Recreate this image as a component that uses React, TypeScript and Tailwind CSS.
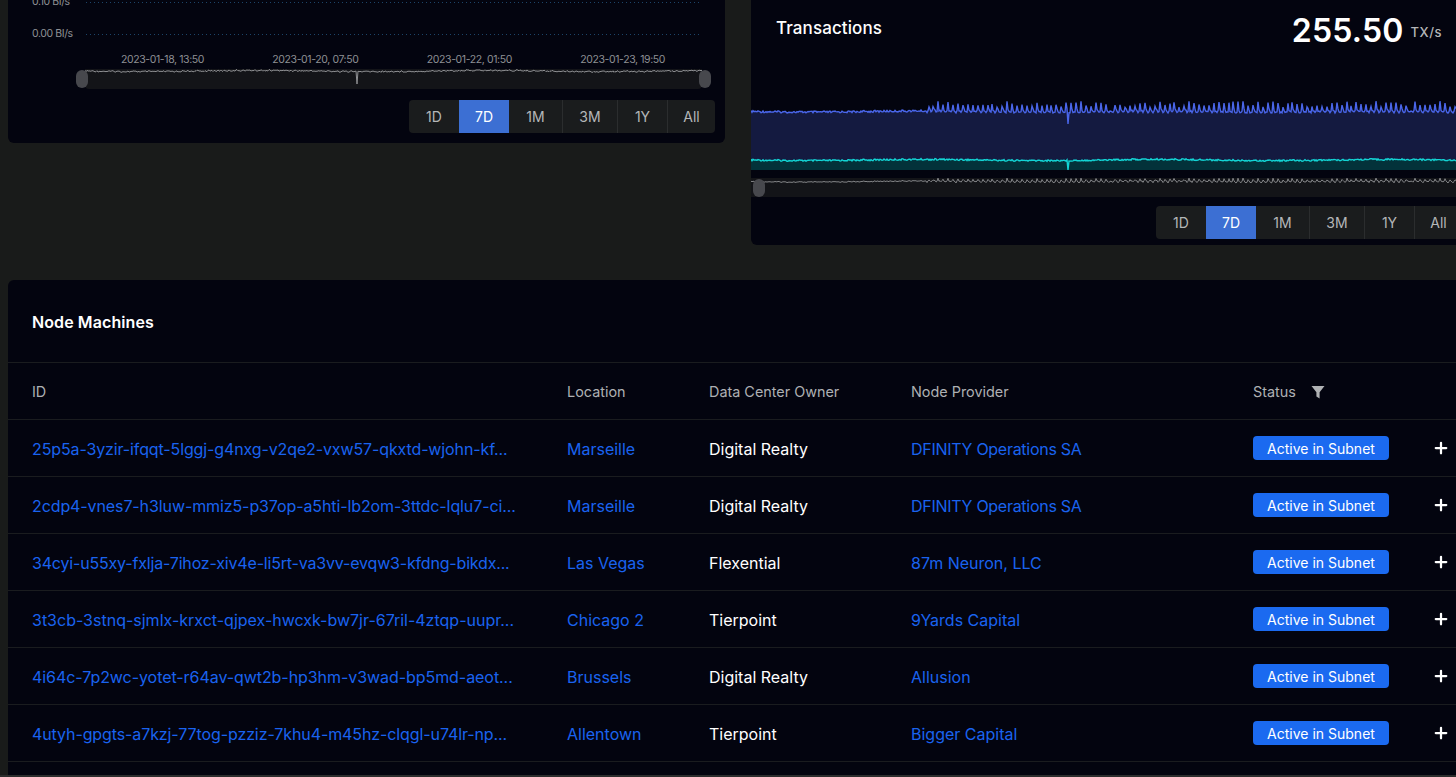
import { Plus } from "lucide-react";

const FONT = "font-['Inter','Liberation_Sans',sans-serif]";

type Row = { id: string; track: string; location: string; owner: string; provider: string };

const ROWS: Row[] = [
  { id: "25p5a-3yzir-ifqqt-5lggj-g4nxg-v2qe2-vxw57-qkxtd-wjohn-kf...", track: "tracking-[-0.12px]", location: "Marseille", owner: "Digital Realty", provider: "DFINITY Operations SA" },
  { id: "2cdp4-vnes7-h3luw-mmiz5-p37op-a5hti-lb2om-3ttdc-lqlu7-ci...", track: "tracking-[-0.1px]", location: "Marseille", owner: "Digital Realty", provider: "DFINITY Operations SA" },
  { id: "34cyi-u55xy-fxlja-7ihoz-xiv4e-li5rt-va3vv-evqw3-kfdng-bikdx...", track: "tracking-[-0.18px]", location: "Las Vegas", owner: "Flexential", provider: "87m Neuron, LLC" },
  { id: "3t3cb-3stnq-sjmlx-krxct-qjpex-hwcxk-bw7jr-67ril-4ztqp-uupr...", track: "tracking-normal", location: "Chicago 2", owner: "Tierpoint", provider: "9Yards Capital" },
  { id: "4i64c-7p2wc-yotet-r64av-qwt2b-hp3hm-v3wad-bp5md-aeot...", track: "tracking-[-0.06px]", location: "Brussels", owner: "Digital Realty", provider: "Allusion" },
  { id: "4utyh-gpgts-a7kzj-77tog-pzziz-7khu4-m45hz-clqgl-u74lr-np...", track: "tracking-[-0.1px]", location: "Allentown", owner: "Tierpoint", provider: "Bigger Capital" },
];

// small repeatable noise so the charts look the same on every load
function noise(i: number) {
  const v = Math.sin(i * 12.9898) * 43758.5453;
  return v - Math.floor(v);
}

function linePoints(
  width: number,
  base: number,
  jitter: number,
  spike: number,
  spikeFrom: number,
  dipAt: number,
  dipTo: number,
) {
  const pts: string[] = [];
  for (let x = 0; x <= width; x += 1) {
    const drift = Math.sin(x / 37) * 0.6;
    let y = base + drift + (noise(x) - 0.5) * jitter;
    if (x >= spikeFrom) {
      const phase = (x + Math.floor(x / 60)) % 5;
      if (phase === 0) y = base - spike * (0.45 + noise(x + 7) * 0.7);
      if (phase === 1) y = base - spike * 0.35 * noise(x + 3);
      if (phase === 3) y = base + 1.5 * noise(x + 11);
    }
    if (x === dipAt) y = dipTo;
    pts.push(`${x},${y.toFixed(1)}`);
  }
  return pts.join(" ");
}

function Ranges() {
  const items = [
    { label: "1D", w: "w-[50px]" },
    { label: "7D", w: "w-[50px]", active: true },
    { label: "1M", w: "w-[53px]" },
    { label: "3M", w: "w-[55px]" },
    { label: "1Y", w: "w-[50px]" },
    { label: "All", w: "w-[48px]" },
  ];
  return (
    <div className="flex h-[33px] w-max rounded-[4px] bg-[#1a1c1d] text-[14px] text-[#b4b6b8]">
      {items.map((it, i) => (
        <div
          key={it.label}
          className={`flex shrink-0 items-center justify-center ${it.w} ${
            it.active ? "bg-[#3c6fd3] text-white" : i > 2 ? "border-l border-[#2b2d2e]" : ""
          }`}
        >
          {it.label}
        </div>
      ))}
    </div>
  );
}

function Handle({ className }: { className: string }) {
  return <div className={`absolute top-px h-[18px] w-[12px] rounded-full bg-[#47484d] ${className}`} />;
}

function AxisRow({ label, className }: { label: string; className: string }) {
  return (
    <div className={`flex h-[16px] items-center text-[10.5px] tracking-[-0.4px] text-[#8e9094] ${className}`}>
      <span className="w-[54px] whitespace-nowrap">{label}</span>
      <div className="mr-[24px] h-px flex-1 bg-[repeating-linear-gradient(90deg,#1c4468_0_1px,transparent_1px_4px)]" />
    </div>
  );
}

function LeftCard() {
  return (
    <div className="-mt-[6px] flex h-[149px] w-[717px] shrink-0 flex-col rounded-b-[6px] bg-[#03040f] pl-[24px]">
      <AxisRow label="0.10 BI/s" className="" />
      <AxisRow label="0.00 BI/s" className="mt-[16px]" />
      <div className="ml-[89px] mt-[11px] flex w-[544px] justify-between text-[10.5px] leading-[14px] tracking-[-0.4px] text-[#8e9094]">
        <span>2023-01-18, 13:50</span>
        <span>2023-01-20, 07:50</span>
        <span>2023-01-22, 01:50</span>
        <span>2023-01-23, 19:50</span>
      </div>
      <div className="relative ml-[53px] mt-[2px] h-[20px] w-[617px] rounded-b-[4px] bg-[#131418]">
        <svg width="617" height="20" className="block">
          <polyline
            points={linePoints(617, 2, 1.6, 0, 9999, 272, 15)}
            fill="none"
            stroke="#8f9093"
            strokeWidth="1"
          />
        </svg>
        <Handle className="-left-[9px]" />
        <Handle className="-right-[9px]" />
      </div>
      <div className="mr-[10px] mt-[11px] flex justify-end">
        <Ranges />
      </div>
    </div>
  );
}

function RightCard() {
  const blue = linePoints(705, 111.5 - 60, 2, 9, 175, 317, 64);
  return (
    <div className="flex h-[245px] w-[730px] shrink-0 flex-col rounded-bl-[6px] bg-[#03040f]">
      <div className="flex h-[60px] items-start justify-between pl-[25px] pt-[17px]">
        <span className="text-[17px] font-medium leading-[22px] tracking-[0.1px] text-white">Transactions</span>
        <div className="mr-[39px] mt-[-6px] flex items-center whitespace-nowrap">
          <span className="text-[32px] font-semibold leading-[40px] tracking-[0.2px] text-white">255.50</span>
          <span className="ml-[7px] mt-[4px] text-[13px] font-medium tracking-[0.5px] text-[#b4b6b8]">TX/s</span>
        </div>
      </div>
      <svg width="705" height="118" className="block shrink-0">
        <rect x="0" y="54" width="705" height="47" fill="#141a40" />
        <rect x="0" y="100" width="705" height="10" fill="#03323a" />
        <polygon points={`0,56 ${blue} 705,56`} fill="#141a40" />
        <polyline points={blue} fill="none" stroke="#4a66ea" strokeWidth="1.4" />
        <polyline points={linePoints(705, 100, 1.6, 0, 9999, 317, 110)} fill="none" stroke="#13d4d4" strokeWidth="1.4" />
      </svg>
      <div className="relative h-[19px] w-full bg-[#131418]">
        <svg width="705" height="19" className="block">
          <polyline points={linePoints(705, 3.5, 1, 3, 175, 9999, 0)} fill="none" stroke="#838487" strokeWidth="1" />
        </svg>
        <Handle className="left-[2px]" />
      </div>
      <div className="mt-[9px] pl-[405px]">
        <Ranges />
      </div>
    </div>
  );
}

function FilterIcon() {
  return (
    <svg width="14" height="14" viewBox="0 0 14 14" className="ml-[15px]">
      <path d="M0.5 1h13L8.6 7.2V13.5L5.4 11.6V7.2Z" fill="#b0b2b4" />
    </svg>
  );
}

const GRID = "grid grid-cols-[535px_142px_202px_342px_183px_1fr] items-center pl-[24px]";

function NodeTable() {
  return (
    <div className="ml-[8px] mt-[35px] h-[495px] w-[1460px] rounded-tl-[6px] bg-[#03040f]">
      <div className="flex h-[83px] items-center border-b border-[#1a1c1f] pl-[24px] pt-[2px]">
        <span className="text-[16px] font-semibold tracking-[0.1px] text-white">Node Machines</span>
      </div>
      <div className={`${GRID} h-[57px] border-b border-[#1a1c1f] pt-[2px] text-[14.4px] text-[#aeb0b3]`}>
        <span>ID</span>
        <span>Location</span>
        <span>Data Center Owner</span>
        <span>Node Provider</span>
        <span className="flex items-center">
          Status
          <FilterIcon />
        </span>
        <span />
      </div>
      {ROWS.map((r) => (
        <div key={r.id} className={`${GRID} h-[57px] border-b border-[#1a1c1f] text-[16px]`}>
          <span className={`whitespace-nowrap pt-[1px] text-[#1a63ef] ${r.track}`}>{r.id}</span>
          <span className="pt-[1px] text-[#1a63ef]">{r.location}</span>
          <span className="pt-[1px] text-white">{r.owner}</span>
          <span className={`pt-[1px] text-[#1a63ef] ${r.provider.startsWith("DFINITY") ? "tracking-[-0.28px]" : ""}`}>
            {r.provider}
          </span>
          <span className="flex h-[24px] w-[136px] items-center justify-center rounded-[4px] bg-[#1b6af0] text-[14px] text-white">
            Active in Subnet
          </span>
          <Plus size={18} strokeWidth={3} color="#ffffff" className="-ml-[4px]" />
        </div>
      ))}
    </div>
  );
}

export default function App() {
  return (
    <div className={`h-[777px] w-[1456px] overflow-hidden bg-[#191b1a] ${FONT}`}>
      <div className="flex items-start gap-[26px] pl-[8px]">
        <LeftCard />
        <RightCard />
      </div>
      <NodeTable />
      <div className="h-[2px] w-full bg-[#2c2d2d]" />
    </div>
  );
}
